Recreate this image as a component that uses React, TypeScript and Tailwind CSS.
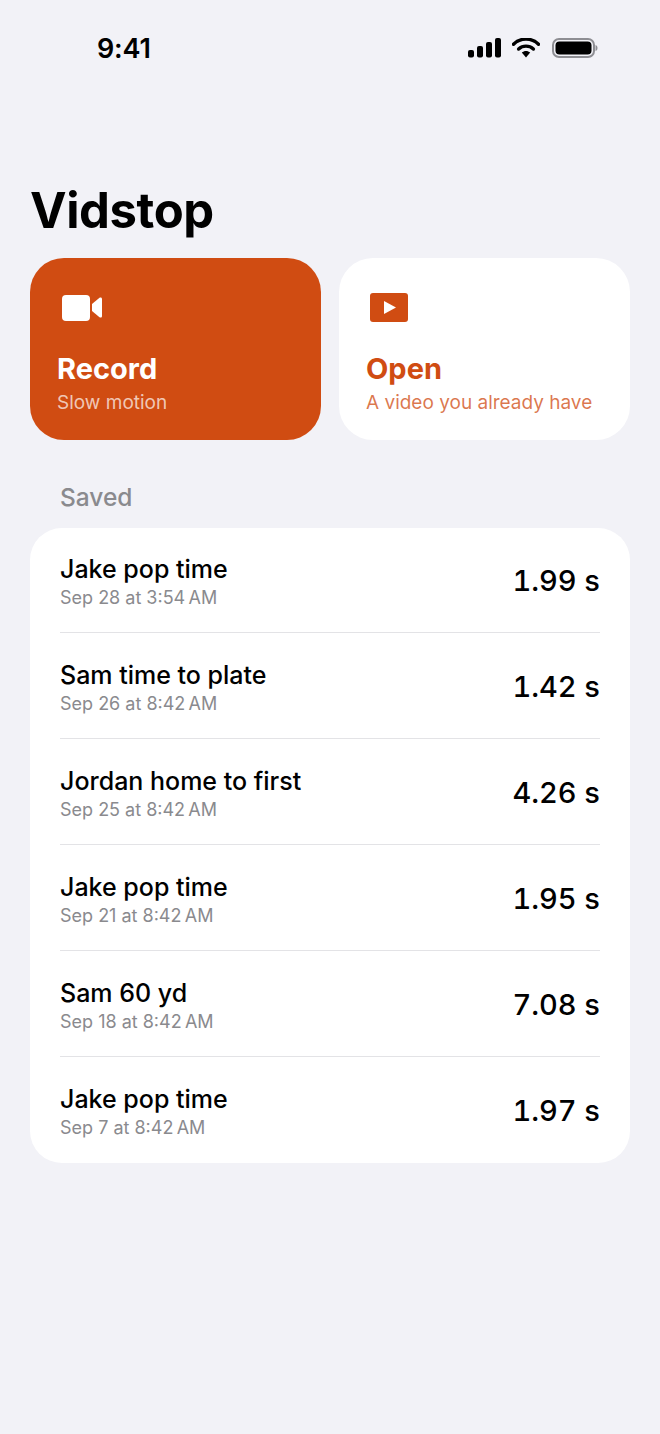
const rows = [
  { name: "Jake pop time", date: "Sep 28 at 3:54\u202fAM", value: "1.99 s" },
  { name: "Sam time to plate", date: "Sep 26 at 8:42\u202fAM", value: "1.42 s" },
  { name: "Jordan home to first", date: "Sep 25 at 8:42\u202fAM", value: "4.26 s" },
  { name: "Jake pop time", date: "Sep 21 at 8:42\u202fAM", value: "1.95 s" },
  { name: "Sam 60 yd", date: "Sep 18 at 8:42\u202fAM", value: "7.08 s" },
  { name: "Jake pop time", date: "Sep 7 at 8:42\u202fAM", value: "1.97 s" },
];

function StatusIcons() {
  return (
    <div className="flex items-center">
      <svg width="33" height="20" viewBox="0 0 33 20" className="text-black">
        <rect x="0" y="12" width="6" height="7.5" rx="2" fill="currentColor" />
        <rect x="9" y="8" width="6" height="11.5" rx="2" fill="currentColor" />
        <rect x="18" y="4" width="6" height="15.5" rx="2" fill="currentColor" />
        <rect x="27" y="0" width="6" height="19.5" rx="2" fill="currentColor" />
      </svg>
      <svg width="28" height="20" viewBox="0 0 28 20" className="ml-[11px]">
        <path d="M1.5 6.2 C8.5 -0.6 19.5 -0.6 26.5 6.2" fill="none" stroke="#000" strokeWidth="3.4" strokeLinecap="round" />
        <path d="M6.6 11 C10.8 7.2 17.2 7.2 21.4 11" fill="none" stroke="#000" strokeWidth="3.4" strokeLinecap="round" />
        <path d="M9.8 14.6 C12.2 12.5 15.8 12.5 18.2 14.6 L14 19.5 Z" fill="#000" />
      </svg>
      <svg width="46" height="20" viewBox="0 0 46 20" className="ml-[12px]">
        <rect x="1" y="1" width="41" height="18" rx="6" fill="none" stroke="#8e8e93" strokeWidth="2" />
        <rect x="3.5" y="3.5" width="36" height="13" rx="4" fill="#000" />
        <path d="M43.5 7 C45 7.5 45.5 8.5 45.5 10 C45.5 11.5 45 12.5 43.5 13 Z" fill="#8e8e93" />
      </svg>
    </div>
  );
}

export default function App() {
  return (
    <div className="min-h-[1434px] w-[660px] bg-[#f2f2f7] font-['Inter',sans-serif] text-black">
      <div className="flex h-[96px] items-center justify-between pl-[97px] pr-[62px]">
        <span className="text-[27px] font-semibold leading-none tracking-[-0.2px]">9:41</span>
        <StatusIcons />
      </div>

      <div className="px-[30px]">
        <h1 className="mt-[85px] text-[49px] font-bold leading-[60px] tracking-[-0.4px]">Vidstop</h1>

        <div className="mt-[17px] grid grid-cols-[291px_291px] gap-[18px]">
          <div className="flex h-[182px] flex-col rounded-[34px] bg-[#d04c12] pl-[27px] pt-[34px] text-white">
            <svg width="42" height="30" viewBox="0 0 42 30" className="ml-[4px]">
              <rect x="1" y="3" width="28" height="26" rx="4" fill="#fff" />
              <path d="M31 12 L38.5 5.8 C39.8 4.9 41 5.6 41 7 V24 C41 25.4 39.8 26 38.5 25.2 L31 19 Z" fill="#fff" />
            </svg>
            <div className="mt-[30px] text-[29px] font-bold leading-[34px]">Record</div>
            <div className="mt-[4px] text-[19px] leading-[26px] text-white/70">Slow motion</div>
          </div>

          <div className="flex h-[182px] flex-col rounded-[34px] bg-white pl-[27px] pt-[34px] text-[#d04c12]">
            <svg width="42" height="30" viewBox="0 0 42 30" className="ml-[3px]">
              <rect x="1" y="1" width="38" height="29" rx="3" fill="#d04c12" />
              <path d="M15 9 L27 15.5 L15 22 Z" fill="#fff" />
            </svg>
            <div className="mt-[30px] text-[29px] font-bold leading-[34px]">Open</div>
            <div className="mt-[4px] text-[19px] leading-[26px] text-[#d04c12]/75">A video you already have</div>
          </div>
        </div>

        <div className="mt-[42px] pl-[30px] text-[24.5px] font-medium leading-[30px] text-[#8a8a8e]">Saved</div>

        <div className="mt-[16px] rounded-[32px] bg-white px-[30px] pb-px">
          {rows.map((row, i) => (
            <div key={i}>
              <div className={`flex items-center justify-between ${i === 0 ? "h-[104px] pt-px" : "h-[105px] pt-[2px]"}`}>
                <div className="flex flex-col">
                  <span className="text-[25px] font-medium leading-[32px]">{row.name}</span>
                  <span className="-mb-[2px] text-[18px] leading-[26px] text-[#8a8a8e]">{row.date}</span>
                </div>
                <span className="text-[29px] font-medium leading-none tabular-nums">{row.value}</span>
              </div>
              {i < rows.length - 1 && <div className="h-px bg-[#e3e3e6]" />}
            </div>
          ))}
        </div>
      </div>
    </div>
  );
}
